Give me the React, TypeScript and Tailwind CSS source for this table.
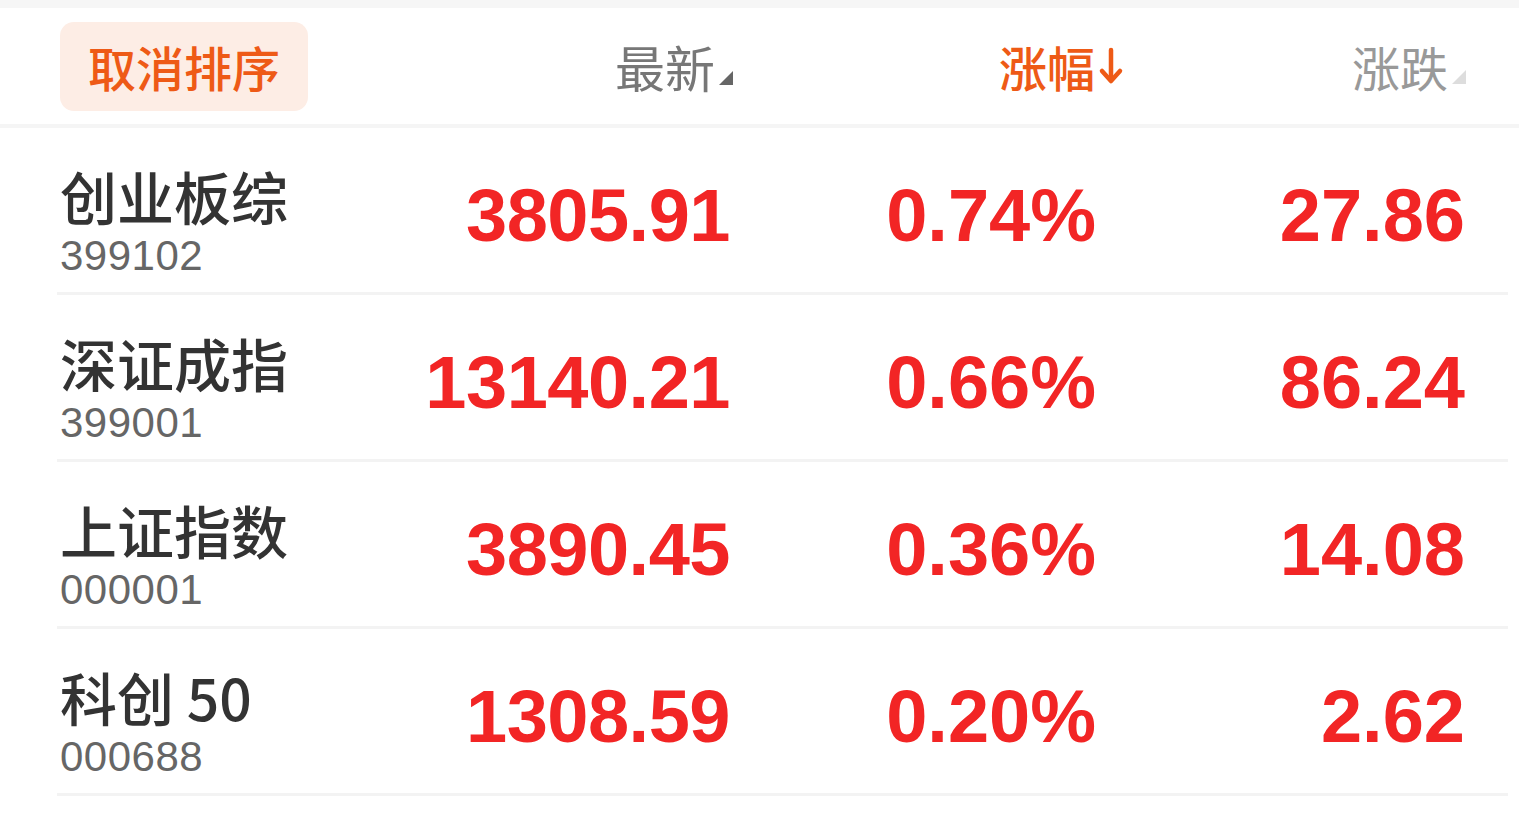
const rows = [
  { name: "创业板综", code: "399102", last: "3805.91", pct: "0.74%", chg: "27.86" },
  { name: "深证成指", code: "399001", last: "13140.21", pct: "0.66%", chg: "86.24" },
  { name: "上证指数", code: "000001", last: "3890.45", pct: "0.36%", chg: "14.08" },
  { name: "科创 50", code: "000688", last: "1308.59", pct: "0.20%", chg: "2.62" },
];

const cjk = "font-['Noto_Sans_CJK_SC','Noto_Sans',sans-serif]";
const num = "font-['Liberation_Sans',Arial,sans-serif]";

function Corner({ color }: { color: string }) {
  return (
    <svg width="14" height="14" viewBox="0 0 14 14" className="self-end mb-[6px] ml-[4px]">
      <polygon points="14,0 14,14 0,14" fill={color} />
    </svg>
  );
}

export default function App() {
  return (
    <div className="w-[1519px] h-[818px] bg-[#f6f6f6] pt-[8px] overflow-hidden">
      <div className="bg-white h-full">
        {/* header */}
        <div className={`flex items-center h-[120px] pl-[60px] border-b-[4px] border-[#f5f5f5] ${cjk}`}>
          <button className="w-[248px] h-[89px] rounded-[14px] bg-[#fdede5] text-[#ee5a16] text-[48px] leading-none font-medium">
            取消排序
          </button>
          <div className="w-[425px] flex justify-end items-center">
            <span className="text-[50px] leading-none text-[#777]">最新</span>
            <Corner color="#666" />
          </div>
          <div className="w-[392px] flex justify-end items-center">
            <span className="text-[48px] leading-none text-[#ee5a16] font-medium">涨幅</span>
            <svg width="28" height="40" viewBox="0 0 28 40" className="ml-[2px]">
              <path d="M14 4 V34" stroke="#ee5a16" strokeWidth="4.5" strokeLinecap="round" />
              <path d="M5 25 L14 35 L23 25" stroke="#ee5a16" strokeWidth="4.5" fill="none" strokeLinecap="round" strokeLinejoin="round" />
            </svg>
          </div>
          <div className="w-[341px] flex justify-end items-center">
            <span className="text-[48px] leading-none text-[#999]">涨跌</span>
            <Corner color="#ddd" />
          </div>
        </div>

        {/* rows */}
        {rows.map((r) => (
          <div key={r.code} className="flex items-center h-[167px] ml-[57px] mr-[11px] border-b-[3px] border-[#f3f3f3]">
            <div className="w-[360px] pl-[3px] pt-[19px] flex flex-col">
              <span className={`${cjk} text-[57px] leading-[64px] font-medium text-[#333] whitespace-pre`}>{r.name}</span>
              <span className={`${num} mt-[9px] text-[42px] leading-[40px] text-[#666] tracking-[0.5px]`}>{r.code}</span>
            </div>
            <div className={`${num} font-bold text-[74px] text-[#f22525] leading-none flex pt-[12px] whitespace-nowrap`}>
              <span className="w-[313px] text-right tracking-[-0.5px]">{r.last}</span>
              <span className="w-[366px] text-right">{r.pct}</span>
              <span className="w-[369px] text-right">{r.chg}</span>
            </div>
          </div>
        ))}
      </div>
    </div>
  );
}
